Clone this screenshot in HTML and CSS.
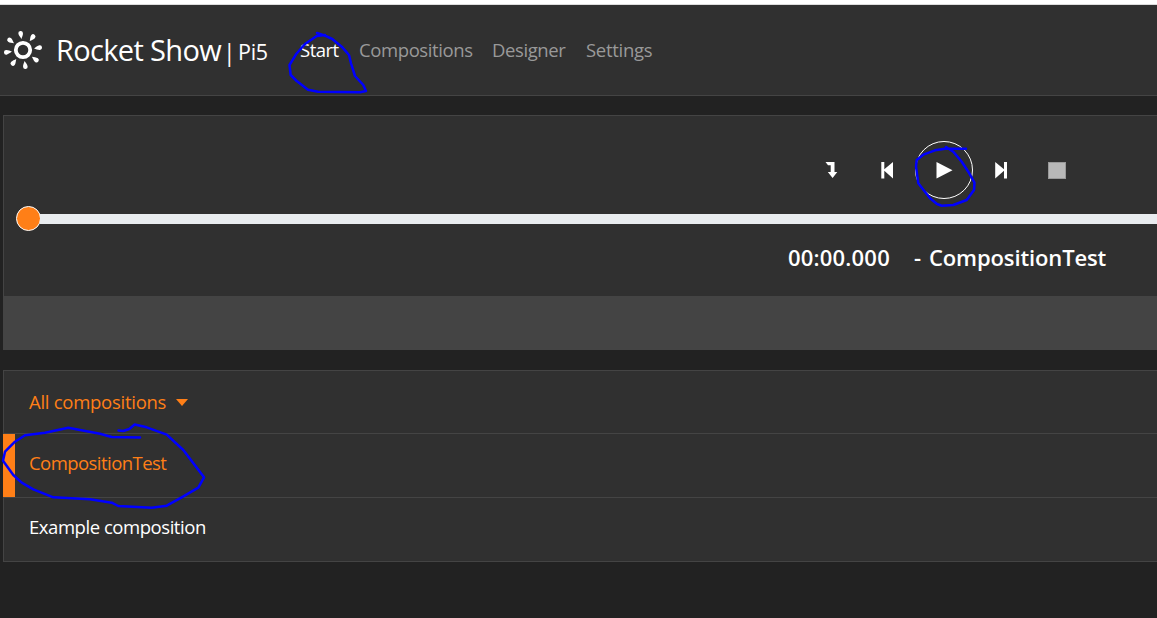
FILE: index.html
```html
<!DOCTYPE html>
<html lang="en">
<head>
<meta charset="utf-8">
<title>Rocket Show</title>
<link rel="stylesheet" href="styles.css">
</head>
<body>
<header class="navbar">
  <div class="brand">
    <svg class="logo" viewBox="0 0 40 40" width="40" height="40">
      <circle cx="20" cy="20" r="7.2" fill="none" stroke="#fff" stroke-width="3.8"/>
      <g fill="#fff" transform="translate(20 20) rotate(-8)">
        <path id="ray" d="M0-11.2C-.8-13-2.3-15-2.3-16.9a2.3 2.3 0 0 1 4.6 0C2.3-15 .8-13 0-11.2z"/>
        <use href="#ray" transform="rotate(45)"/><use href="#ray" transform="rotate(90)"/>
        <use href="#ray" transform="rotate(135)"/><use href="#ray" transform="rotate(180)"/>
        <use href="#ray" transform="rotate(225)"/><use href="#ray" transform="rotate(270)"/>
        <use href="#ray" transform="rotate(315)"/>
      </g>
    </svg>
    <span class="brand-name">Rocket Show</span>
    <span class="device"><span class="bar">|</span><span>Pi5</span></span>
  </div>
  <nav class="menu">
    <a class="start active">Start</a>
    <a class="comps">Compositions</a>
    <a class="designer">Designer</a>
    <a class="settings">Settings</a>
  </nav>
</header>
<main>
  <section class="player">
    <div class="controls">
      <span class="control"><svg width="14" height="18" viewBox="0 0 14 18"><path fill="#fff" d="M1.5 1h9v10h2.8L8.6 17 3.8 11h2.9V4.2H4z"/></svg></span>
      <span class="control"><svg width="14" height="18" viewBox="0 0 14 18"><path fill="#fff" d="M1.3 1h3v7.2L13 1v16.4L4.3 9.8v7.6h-3z"/></svg></span>
      <span class="control play"><svg width="18" height="18" viewBox="0 0 18 18"><path fill="#fff" d="M1.5 1l16 8.2-16 8.2z"/></svg></span>
      <span class="control"><svg width="14" height="18" viewBox="0 0 14 18"><path fill="#fff" d="M13 1h-3v7.2L1.2 1v16.4L10 9.8v7.6h3z"/></svg></span>
      <span class="control"><span class="stop"></span></span>
    </div>
    <div class="slider"><span class="knob"></span><span class="track"></span></div>
    <div class="status"><span class="time">00:00.000</span><span class="title"><span class="dash">-</span>CompositionTest</span></div>
    <div class="player-footer"></div>
  </section>
  <section class="list">
    <div class="row head"><span class="t-all">All compositions</span><span class="caret"></span></div>
    <div class="row current"><span class="t-test">CompositionTest</span></div>
    <div class="row"><span class="t-example">Example composition</span></div>
  </section>
</main>
<svg class="ink" width="1157" height="618" viewBox="0 0 1157 618">
  <path d="M317 33L325 35.7L332.3 39L341.7 46.7L349 55L351 63.3L355 76L363.3 85L366 91L360 92.3L318 91.7L308 89.7L296.7 81L290.7 75L289.5 65L296 54.3L305 44L316.7 36L325 35"/>
  <path d="M966 148.7H945L935 150.3L923.3 154.7L916.7 160L916 166.7L918.3 183.3L930 198.3L937 204L941.7 205.7L953.3 205L966.7 200L974 190L974.5 182.7L968.3 171.7L961.7 161.7L953.3 151.7L946 147"/>
  <path d="M118.5 430.5L123.3 431L129.3 429L134.7 424.5L146.7 427.3L166.7 434.7L183.3 450L204 477.3L198.3 487.7L181.7 497.3L166.7 505.7L151.7 507.7L118.3 506L111.7 502.7L90 499.3L53.3 497.3L33.3 489.3L21.7 482.7L13.3 475L3 460.7L5 451.7L15 441.7L25 435.3L45 432.7L68.3 427.7L86.7 431.3L100 433.7L111.7 437L140 437.5"/>
</svg>
</body>
</html>
```
FILE: styles.css
```css
* { box-sizing: border-box; }
body {
  margin: 0;
  height: 618px;
  overflow: hidden;
  background: #222;
  color: #fff;
  font: 18.5px/28px "Open Sans", "Noto Sans", sans-serif;
  border-top: 4px solid #fff;
}
.navbar {
  height: 92px;
  display: flex;
  align-items: center;
  background: #303030;
  border-top: 1px solid #ddd;
  border-bottom: 1px solid #444;
  padding-left: 3px;
  white-space: nowrap;
}
.brand { display: flex; align-items: center; width: 297px; }
.logo { flex: none; }
.brand-name { margin-left: 13px; width: 171px; font-size: 29px; letter-spacing: -0.65px; }
.device { display: flex; align-items: center; font-size: 21.5px; letter-spacing: -0.3px; margin-top: 3px; }
.bar { width: 15px; margin-left: -4px; font-size: 23px; }
.menu { display: flex; gap: 20px; color: #999; }
.menu a { flex: none; }
.menu .active { color: #fff; }
.start { width: 39px; letter-spacing: -0.5px; }
.comps { width: 113px; letter-spacing: -0.4px; }
.designer { width: 74px; letter-spacing: -0.4px; }
.settings { letter-spacing: -0.3px; }
main { margin: 19px 0 0 3px; }
.player {
  height: 235px;
  background: #303030;
  border: 1px solid #444;
  border-right: 0;
  display: flex;
  flex-direction: column;
}
.controls { display: flex; padding: 25px 0 0 799px; height: 92px; }
.control { width: 56px; height: 58px; display: flex; align-items: center; justify-content: center; }
.play { border: 1px solid #fff; border-radius: 50%; width: 58px; }
.stop { width: 18px; height: 17px; background: #b8b8b8; border: 1px solid #999; }
.slider { display: flex; align-items: flex-start; height: 22px; padding-left: 12px; }
.knob { flex: none; width: 25px; height: 25px; margin-top: -2px; border: 1px solid #fff; border-radius: 50%; background: #ff7f17; }
.track { flex: 1; height: 10px; margin: 6px 0 0 -1px; background: #e9ecef; }
.status { display: flex; padding: 10px 0 0 784px; height: 66px; font-size: 22px; line-height: 34px; font-weight: 600; white-space: nowrap; }
.time { width: 126px; letter-spacing: 0.2px; }
.title { letter-spacing: -0.13px; }
.dash { display: inline-block; width: 15px; }
.player-footer { flex: 1; background: #444; }
.list { margin-top: 20px; border: 1px solid #444; border-right: 0; background: #303030; }
.row { height: 64px; padding-left: 25px; display: flex; align-items: center; border-bottom: 1px solid #444; }
.row:last-child { border-bottom: 0; height: 63px; padding-bottom: 5px; }
.head { height: 63px; color: #ff7f17; }
.current { color: #ff7f17; position: relative; padding-bottom: 5px; }
.current::before { content: ""; position: absolute; left: -1px; top: 0; bottom: 0; width: 12px; background: #ff7f17; }
.t-all { letter-spacing: -0.27px; }
.t-test { letter-spacing: -0.55px; }
.t-example { letter-spacing: -0.45px; }
.caret { margin-left: 10px; border: 6px solid transparent; border-top: 7px solid #ff7f17; border-bottom: 0; }
.ink { position: absolute; left: 0; top: 0; fill: none; stroke: #00f; stroke-width: 2.5; stroke-linejoin: round; stroke-linecap: round; }
```
